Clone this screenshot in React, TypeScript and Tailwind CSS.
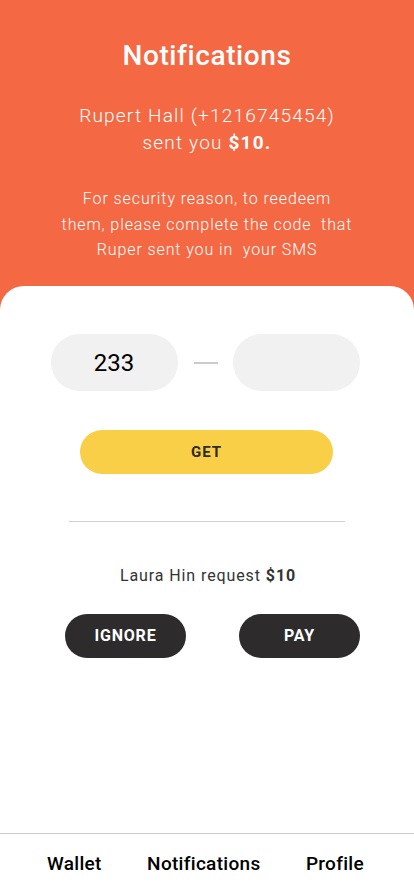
import React, { useState } from "react";

const font = { fontFamily: "Roboto, 'Noto Sans', sans-serif" };

const App = () => {
    const [first, setFirst] = useState("233");
    const [second, setSecond] = useState("");

    return (
        <div className="w-[414px] h-[896px] bg-[#f46843] flex flex-col overflow-hidden" style={font}>
            <header className="text-white text-center pt-[38px] h-[286px] shrink-0">
                <h1 className="text-[28px] leading-[36px] font-medium tracking-[0.6px]">Notifications</h1>
                <p className="mt-[28px] text-[19px] leading-[27px] font-light tracking-[1.2px]">
                    Rupert Hall (+1216745454)
                    <br />
                    sent you <span className="font-bold">$10.</span>
                </p>
                <p className="mt-[30px] text-[16px] leading-[25.5px] font-light tracking-[0.9px]">
                    For security reason, to reedeem
                    <br />
                    them, please complete the code&nbsp; that
                    <br />
                    Ruper sent you in&nbsp; your SMS
                </p>
            </header>

            <main className="flex-1 bg-white rounded-t-[24px] flex flex-col">
                <div className="flex items-center justify-center mt-[48px] pr-[4px]">
                    <input
                        value={first}
                        onChange={(e) => setFirst(e.target.value)}
                        className="w-[127px] h-[57px] rounded-full bg-[#f1f1f1] text-center text-[24px] text-black outline-none"
                    />
                    <div className="ml-[16px] mr-[15px] w-[24px] h-[2px] bg-[#cccccc]"></div>
                    <input
                        value={second}
                        onChange={(e) => setSecond(e.target.value)}
                        className="w-[127px] h-[57px] rounded-full bg-[#f1f1f1] text-center text-[24px] text-black outline-none"
                    />
                </div>

                <button className="ml-[80px] mt-[39px] w-[253px] h-[44px] rounded-full bg-[#f9cf47] text-[#2d2b2b] text-[15px] font-bold tracking-[1px]">
                    GET
                </button>

                <div className="ml-[69px] mt-[47px] w-[276px] h-px bg-[#d0d0d0]"></div>

                <p className="mt-[42px] text-center text-[16px] text-[#333333] tracking-[0.9px] pl-[2px]">
                    Laura Hin request <span className="font-bold">$10</span>
                </p>

                <div className="flex gap-[53px] mt-[26px] pl-[65px]">
                    <button className="w-[121px] h-[44px] rounded-full bg-[#2d2b2c] text-white text-[16px] font-bold tracking-[0.8px]">
                        IGNORE
                    </button>
                    <button className="w-[121px] h-[44px] rounded-full bg-[#2d2b2c] text-white text-[16px] font-bold tracking-[0.8px]">
                        PAY
                    </button>
                </div>

                <nav className="mt-auto border-t border-[#cccccc] h-[63px] flex items-center justify-between pl-[47px] pr-[50px] pb-[2px]">
                    <span className="text-[19px] font-medium text-black tracking-[0.3px]">Wallet</span>
                    <span className="text-[19px] font-medium text-black tracking-[0.3px]">Notifications</span>
                    <span className="text-[19px] font-medium text-black tracking-[0.3px]">Profile</span>
                </nav>
            </main>
        </div>
    );
};

export default App;
